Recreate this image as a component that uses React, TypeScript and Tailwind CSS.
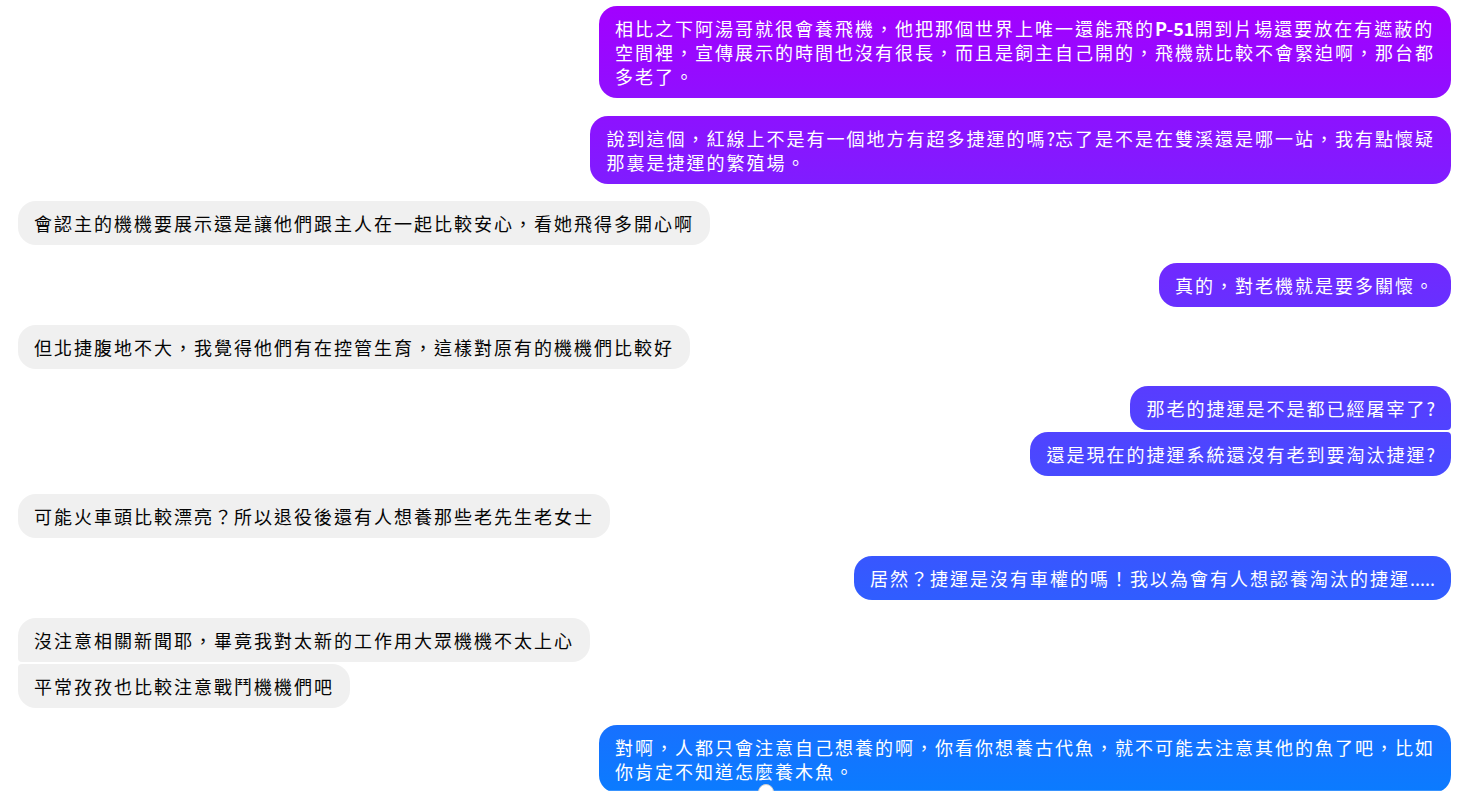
import React from 'react';

type Side = 'me' | 'them';

interface Message {
  side: Side;
  lines: React.ReactNode[];
  // grouped bubbles get a tighter corner where they touch
  corner?: 'top' | 'bottom';
  gap?: 'tight' | 'normal';
}

const messages: Message[] = [
  {
    side: 'me',
    lines: [
      <>相比之下阿湯哥就很會養飛機，他把那個世界上唯一還能飛的<span className="font-bold tracking-normal">P-51</span>開到片場還要放在有遮蔽的</>,
      '空間裡，宣傳展示的時間也沒有很長，而且是飼主自己開的，飛機就比較不會緊迫啊，那台都',
      '多老了。',
    ],
  },
  {
    side: 'me',
    lines: [
      '說到這個，紅線上不是有一個地方有超多捷運的嗎?忘了是不是在雙溪還是哪一站，我有點懷疑',
      '那裏是捷運的繁殖場。',
    ],
  },
  { side: 'them', lines: ['會認主的機機要展示還是讓他們跟主人在一起比較安心，看她飛得多開心啊'] },
  { side: 'me', lines: ['真的，對老機就是要多關懷。'] },
  { side: 'them', lines: ['但北捷腹地不大，我覺得他們有在控管生育，這樣對原有的機機們比較好'] },
  { side: 'me', lines: ['那老的捷運是不是都已經屠宰了?'], corner: 'bottom' },
  { side: 'me', lines: ['還是現在的捷運系統還沒有老到要淘汰捷運?'], corner: 'top', gap: 'tight' },
  { side: 'them', lines: ['可能火車頭比較漂亮？所以退役後還有人想養那些老先生老女士'] },
  { side: 'me', lines: ['居然？捷運是沒有車權的嗎！我以為會有人想認養淘汰的捷運.....'] },
  { side: 'them', lines: ['沒注意相關新聞耶，畢竟我對太新的工作用大眾機機不太上心'], corner: 'bottom' },
  { side: 'them', lines: ['平常孜孜也比較注意戰鬥機機們吧'], corner: 'top', gap: 'tight' },
  {
    side: 'me',
    lines: [
      '對啊，人都只會注意自己想養的啊，你看你想養古代魚，就不可能去注意其他的魚了吧，比如',
      '你肯定不知道怎麼養木魚。',
    ],
  },
];

// ascii runs shouldn't get the wide cjk letter spacing
function renderLine(line: React.ReactNode) {
  if (typeof line !== 'string') return line;
  return line.split(/([\x21-\x7e]+)/).map((part, i) =>
    /^[\x21-\x7e]+$/.test(part) ? (
      <span key={i} className="tracking-normal">
        {part}
      </span>
    ) : (
      part
    )
  );
}

function Bubble({ msg }: { msg: Message }) {
  const mine = msg.side === 'me';
  let radius = 'rounded-[18px]';
  if (mine && msg.corner === 'bottom') radius = 'rounded-[18px] rounded-br-[4px]';
  if (mine && msg.corner === 'top') radius = 'rounded-[18px] rounded-tr-[4px]';
  if (!mine && msg.corner === 'bottom') radius = 'rounded-[18px] rounded-bl-[4px]';
  if (!mine && msg.corner === 'top') radius = 'rounded-[18px] rounded-tl-[4px]';

  return (
    <div className={`flex ${mine ? 'justify-end' : 'justify-start'} ${msg.gap === 'tight' ? 'mt-[2px]' : 'mt-[17.7px] first:mt-0'}`}>
      <div
        className={`${radius} px-4 py-[10px] text-[18px] leading-6 tracking-[2px] whitespace-nowrap ${
          mine
            ? 'bg-[linear-gradient(180deg,#a300ff_0%,#0b7bff_100%)] bg-fixed text-white'
            : 'bg-[#f0f0f0] text-[#050505]'
        }`}
      >
        {msg.lines.map((line, i) => (
          <React.Fragment key={i}>
            {i > 0 && <br />}
            {renderLine(line)}
          </React.Fragment>
        ))}
      </div>
    </div>
  );
}

export default function App() {
  return (
    <div className="relative h-[791px] w-full overflow-hidden bg-white font-['Noto_Sans_CJK_TC','Noto_Sans_CJK_JP',sans-serif]">
      <div className="flex flex-col pl-[18px] pr-[22px] pt-[6px]">
        {messages.map((m, i) => (
          <Bubble key={i} msg={m} />
        ))}
      </div>
      {/* read receipt peeking under the last bubble */}
      <div className="absolute left-[758px] top-[784px] h-4 w-4 rounded-full border border-[#d0d0d0] bg-white" />
    </div>
  );
}
